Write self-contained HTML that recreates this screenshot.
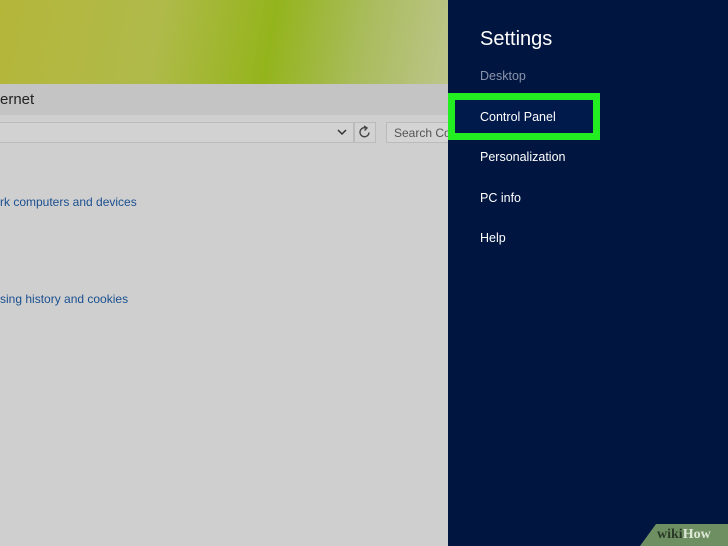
<!DOCTYPE html>
<html><head><meta charset="utf-8"><style>
*{margin:0;padding:0;box-sizing:border-box}
body{width:728px;height:546px;overflow:hidden;position:relative;font-family:"Liberation Sans",sans-serif;background:#cfcfcf}
.bg{position:absolute;left:0;top:0;width:448px;height:84px;background:linear-gradient(100deg,#b4b63a 0%,#b0ba4a 35%,#94b41c 60%,#a9bc5c 80%,#bdc58a 100%)}
.title{position:absolute;left:0;top:84px;width:448px;height:31px;background:#c4c4c4;font-size:15px;color:#222;padding:7px 0 0 0}
.bar{position:absolute;left:0;top:115px;width:448px;height:431px;background:#cfcfcf}
.addr{position:absolute;left:0;top:122px;width:354px;height:21px;border:1px solid #bbb;border-left:none;background:#d2d2d2}
.ref{position:absolute;left:354px;top:122px;width:22px;height:21px;border:1px solid #bbb;background:#d2d2d2}
.search{position:absolute;left:386px;top:122px;width:62px;height:21px;border:1px solid #bbb;border-right:none;background:#d4d4d4;font-size:12px;color:#555;padding:3px 0 0 7px;white-space:nowrap;overflow:hidden}
.link{position:absolute;left:0;font-size:12px;color:#1a4f8f}
.panel{position:absolute;left:448px;top:0;width:280px;height:546px;background:#001640}
.item{position:absolute;left:480px;font-size:12.5px;color:#fff}
.box{position:absolute;left:448px;top:93px;width:152px;height:47px;border:7px solid #22ee22;background:#001a4c}
.wh{position:absolute;left:640px;top:524px;width:88px;height:22px;background:#6e8f61;clip-path:polygon(16px 0,100% 0,100% 100%,0 100%);font-family:"Liberation Serif",serif;font-weight:bold;font-size:14px;color:#2a3a28;padding:3px 0 0 17px}
</style></head><body>
<div class="bg"></div>
<div class="title">ernet</div>
<div class="bar"></div>
<div class="addr"></div>
<svg style="position:absolute;left:337px;top:128px" width="10" height="8"><path d="M1 2 L5 6 L9 2" stroke="#333" stroke-width="1.5" fill="none"/></svg>
<div class="ref"><svg width="20" height="19"><path d="M14 9.5 A4.5 4.5 0 1 1 11 5" stroke="#444" stroke-width="1.4" fill="none"/><path d="M9 3 L12 5 L9.5 7.5" stroke="#444" stroke-width="1.4" fill="none"/></svg></div>
<div class="search">Search Co</div>
<div class="link" style="top:195px">rk computers and devices</div>
<div class="link" style="top:292px">sing history and cookies</div>
<div class="panel"></div>
<div style="position:absolute;left:480px;top:28px;font-size:20px;color:#fff">Settings</div>
<div class="item" style="top:69px;color:#8a93aa">Desktop</div>
<div class="box"></div>
<div class="item" style="top:110px">Control Panel</div>
<div class="item" style="top:150px">Personalization</div>
<div class="item" style="top:191px">PC info</div>
<div class="item" style="top:231px">Help</div>
<div class="wh">wiki<span style="color:#dfe8d8">How</span></div>
</body></html>
